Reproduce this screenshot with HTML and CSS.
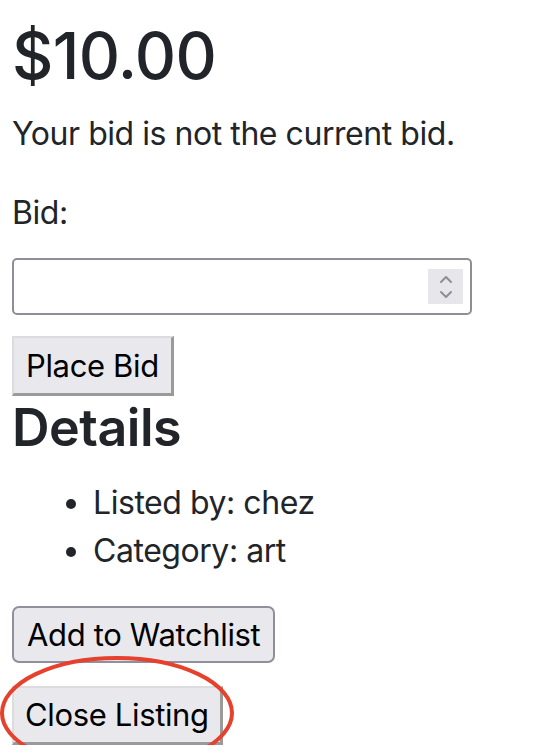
FILE: index.html
```html
<!DOCTYPE html>
<html lang="en">
<head>
<meta charset="utf-8">
<title>Listing</title>
<link rel="stylesheet" href="styles.css">
</head>
<body>
<main class="page">
  <h2 class="price">$10.00</h2>
  <p class="status">Your bid is not the current bid.</p>
  <form class="bid-form">
    <label class="bid-label" for="bid">Bid:</label>
    <div class="number-box">
      <input id="bid" class="number-input" type="text">
      <span class="spinner">
        <svg width="14" height="26" viewBox="0 0 14 26" aria-hidden="true">
          <polyline points="2,8 7,3 12,8" fill="none" stroke="#8e8e96" stroke-width="2" stroke-linecap="round" stroke-linejoin="round"/>
          <polyline points="2,18 7,23 12,18" fill="none" stroke="#8e8e96" stroke-width="2" stroke-linecap="round" stroke-linejoin="round"/>
        </svg>
      </span>
    </div>
    <button type="button" class="btn btn-outset btn-place">Place Bid</button>
  </form>
  <h3 class="details-title">Details</h3>
  <ul class="details-list">
    <li>Listed by: chez</li>
    <li>Category: art</li>
  </ul>
  <div class="actions">
    <button type="button" class="btn btn-native">Add to Watchlist</button>
    <div class="close-wrap">
      <button type="button" class="btn btn-outset btn-close">Close Listing</button>
      <svg class="highlight" width="240" height="130" viewBox="0 0 240 130" aria-hidden="true">
        <ellipse cx="117" cy="67" rx="115" ry="55" fill="none" stroke="#e5412d" stroke-width="4"/>
      </svg>
    </div>
  </div>
</main>
</body>
</html>
```
FILE: styles.css
```css
html, body {
  margin: 0;
  padding: 0;
  background: #ffffff;
}
body {
  font-family: Inter, "Liberation Sans", sans-serif;
  color: #212529;
  font-size: 32px;
  line-height: 48px;
  letter-spacing: -0.45px;
  overflow: hidden;
}
.page {
  padding: 0 12px;
}
.price {
  margin: 0 0 16px;
  padding-top: 18px;
  font-size: 64px;
  font-weight: 500;
  line-height: 76px;
  letter-spacing: -0.6px;
}
.status {
  margin: 0 0 31px;
}
.bid-form {
  display: flex;
  flex-direction: column;
  align-items: flex-start;
}
.bid-label {
  display: block;
  margin-bottom: 21px;
}
.number-box {
  box-sizing: border-box;
  width: 460px;
  height: 57px;
  border: 2px solid #8e8e96;
  border-radius: 5px;
  display: flex;
  align-items: center;
  padding: 0 7px 0 8px;
  background: #fff;
}
.number-input {
  flex: 1;
  min-width: 0;
  border: 0;
  outline: none;
  background: transparent;
  font: inherit;
  padding: 0;
}
.spinner {
  width: 35px;
  height: 35px;
  background: #e6e6eb;
  display: flex;
  align-items: center;
  justify-content: center;
}
.btn {
  font-family: Inter, "Liberation Sans", sans-serif;
  font-size: 31px;
  letter-spacing: -0.35px;
  color: #000;
  background: #e9e9ed;
  margin: 0;
  box-sizing: border-box;
  line-height: 36px;
  cursor: pointer;
}
.btn-outset {
  border-style: solid;
  border-width: 2px 3px 3px 2px;
  border-color: #dcdcdf #9a9a9a #9a9a9a #dcdcdf;
  border-radius: 0;
  padding: 0 12px;
}
.btn-place {
  margin-top: 21px;
  height: 60px;
}
.details-title {
  margin: 0 0 19px;
  font-size: 52px;
  font-weight: 600;
  line-height: 64px;
  letter-spacing: -0.5px;
}
.details-list {
  margin: 0 0 31px;
  padding-left: 81px;
}
.actions {
  display: flex;
  flex-direction: column;
  align-items: flex-start;
  gap: 23px;
}
.btn-native {
  height: 57px;
  border: 2px solid #8f8f9d;
  border-radius: 7px;
  padding: 0 13px;
}
.close-wrap {
  position: relative;
}
.btn-close {
  height: 59px;
  padding: 0 11px;
}
.highlight {
  position: absolute;
  left: -12px;
  top: -40px;
  pointer-events: none;
}
```
